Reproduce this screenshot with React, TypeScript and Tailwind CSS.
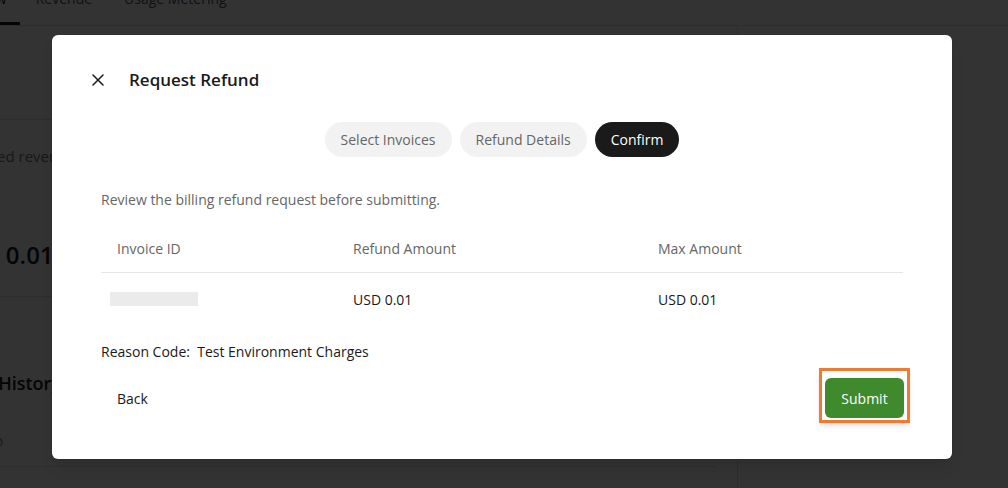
import { ReactNode } from "react"

const font = { fontFamily: '"Open Sans", "Liberation Sans", sans-serif' }

function Step({ children, active }: { children: ReactNode; active?: boolean }) {
  return (
    <div
      className={
        active
          ? "h-[35px] px-4 rounded-full bg-[#1a1a1a] text-white text-[14px] flex items-center"
          : "h-[35px] px-4 rounded-full bg-[#f2f2f2] text-[#666] text-[14px] flex items-center"
      }
    >
      {children}
    </div>
  )
}

function BackgroundPage() {
  return (
    <div className="w-full h-full bg-white flex flex-col">
      {/* tabs, mostly scrolled off the top */}
      <div className="h-[26px] border-b border-[#e2e2e2] flex items-start text-[14px] text-[#1a1a1a] shrink-0">
        <div className="relative pr-[13px] -ml-[54px]">
          <span className="block leading-5 -mt-[11px]">Overview</span>
          <div className="absolute left-[54px] right-0 top-[22px] h-[3px] bg-[#1a1a1a]" />
        </div>
        <div className="px-[13px] ml-[3px]">
          <span className="block leading-5 -mt-[11px] text-[#555]">Revenue</span>
        </div>
        <div className="px-[13px] ml-[6px]">
          <span className="block leading-5 -mt-[11px] text-[#555]">Usage Metering</span>
        </div>
      </div>
      <div className="flex flex-1">
        <div className="w-[716px] flex flex-col">
          <div className="h-[94px] border-b border-[#e2e2e2]" />
          <div className="mt-[26px] -ml-[24px] text-[15px] text-[#777] leading-5">Billed revenue</div>
          <div className="mt-[73px] -ml-[49px] text-[24px] font-semibold text-[#1a1a1a] leading-8 whitespace-nowrap">
            USD 0.01
          </div>
          <div className="mt-[25px] border-b border-[#e2e2e2]" />
          <div className="mt-[72px] -ml-[69px] text-[18px] font-semibold text-[#1a1a1a] leading-7 whitespace-nowrap">
            Refund History
          </div>
          <div className="mt-[35px] -ml-[10px] text-[13px] text-[#888] leading-5">ID</div>
          <div className="mt-[14px] border-b border-[#e2e2e2]" />
        </div>
        <div className="ml-[21px] border-l border-[#e2e2e2] flex-1" />
      </div>
    </div>
  )
}

export default function App() {
  return (
    <div className="relative w-[1008px] h-[488px] overflow-hidden" style={font}>
      <BackgroundPage />
      <div className="absolute inset-0 bg-black/80" />

      <div className="absolute left-[52px] top-[35px] w-[900px] h-[424px] bg-white rounded-[6px] shadow-lg flex flex-col">
        <div className="mt-[31px] h-[28px] pl-[40px] flex items-center">
          <svg width="12" height="12" viewBox="0 0 12 12" className="shrink-0">
            <path d="M1 1 11 11M11 1 1 11" stroke="#1a1a1a" strokeWidth="1.5" strokeLinecap="round" />
          </svg>
          <h2 className="ml-[25px] text-[17px] font-semibold text-[#1a1a1a]">Request Refund</h2>
        </div>

        <div className="mt-[28px] flex justify-center gap-2">
          <Step>Select Invoices</Step>
          <Step>Refund Details</Step>
          <Step active>Confirm</Step>
        </div>

        <div className="px-[49px]">
          <p className="mt-[33px] text-[14px] leading-5 text-[#666]">
            Review the billing refund request before submitting.
          </p>

          <div className="mt-[14px] w-[802px]">
            <div className="flex h-[49px] items-center border-b border-[#e6e6e6] text-[14px] text-[#666]">
              <div className="w-[236px] pl-4">Invoice ID</div>
              <div className="w-[305px] pl-4">Refund Amount</div>
              <div className="flex-1 pl-4">Max Amount</div>
            </div>
            <div className="flex h-[52px] items-center text-[14px] text-[#1a1a1a]">
              <div className="w-[236px] pl-2">
                <div className="ml-[1px] w-[88px] h-[14px] bg-[#ebebeb]" />
              </div>
              <div className="w-[305px] pl-4">USD 0.01</div>
              <div className="flex-1 pl-4">USD 0.01</div>
            </div>
          </div>

          <p className="mt-[17px] text-[14px] leading-5 text-[#1a1a1a] whitespace-pre">
            Reason Code:  Test Environment Charges
          </p>

          <div className="mt-[16px] w-[802px] flex items-center justify-between">
            <button className="h-[40px] px-4 text-[14px] text-[#1a1a1a]">Back</button>
            <div className="relative mr-[-1px]">
              <div className="absolute -left-[6px] -top-[10px] w-[91px] h-[55px] border-[3px] border-[#ef7a32] shadow-md" />
              <button className="relative h-[40px] w-[79px] rounded-[6px] bg-[#3f8a2d] text-white text-[14px]">
                Submit
              </button>
            </div>
          </div>
        </div>
      </div>
    </div>
  )
}
